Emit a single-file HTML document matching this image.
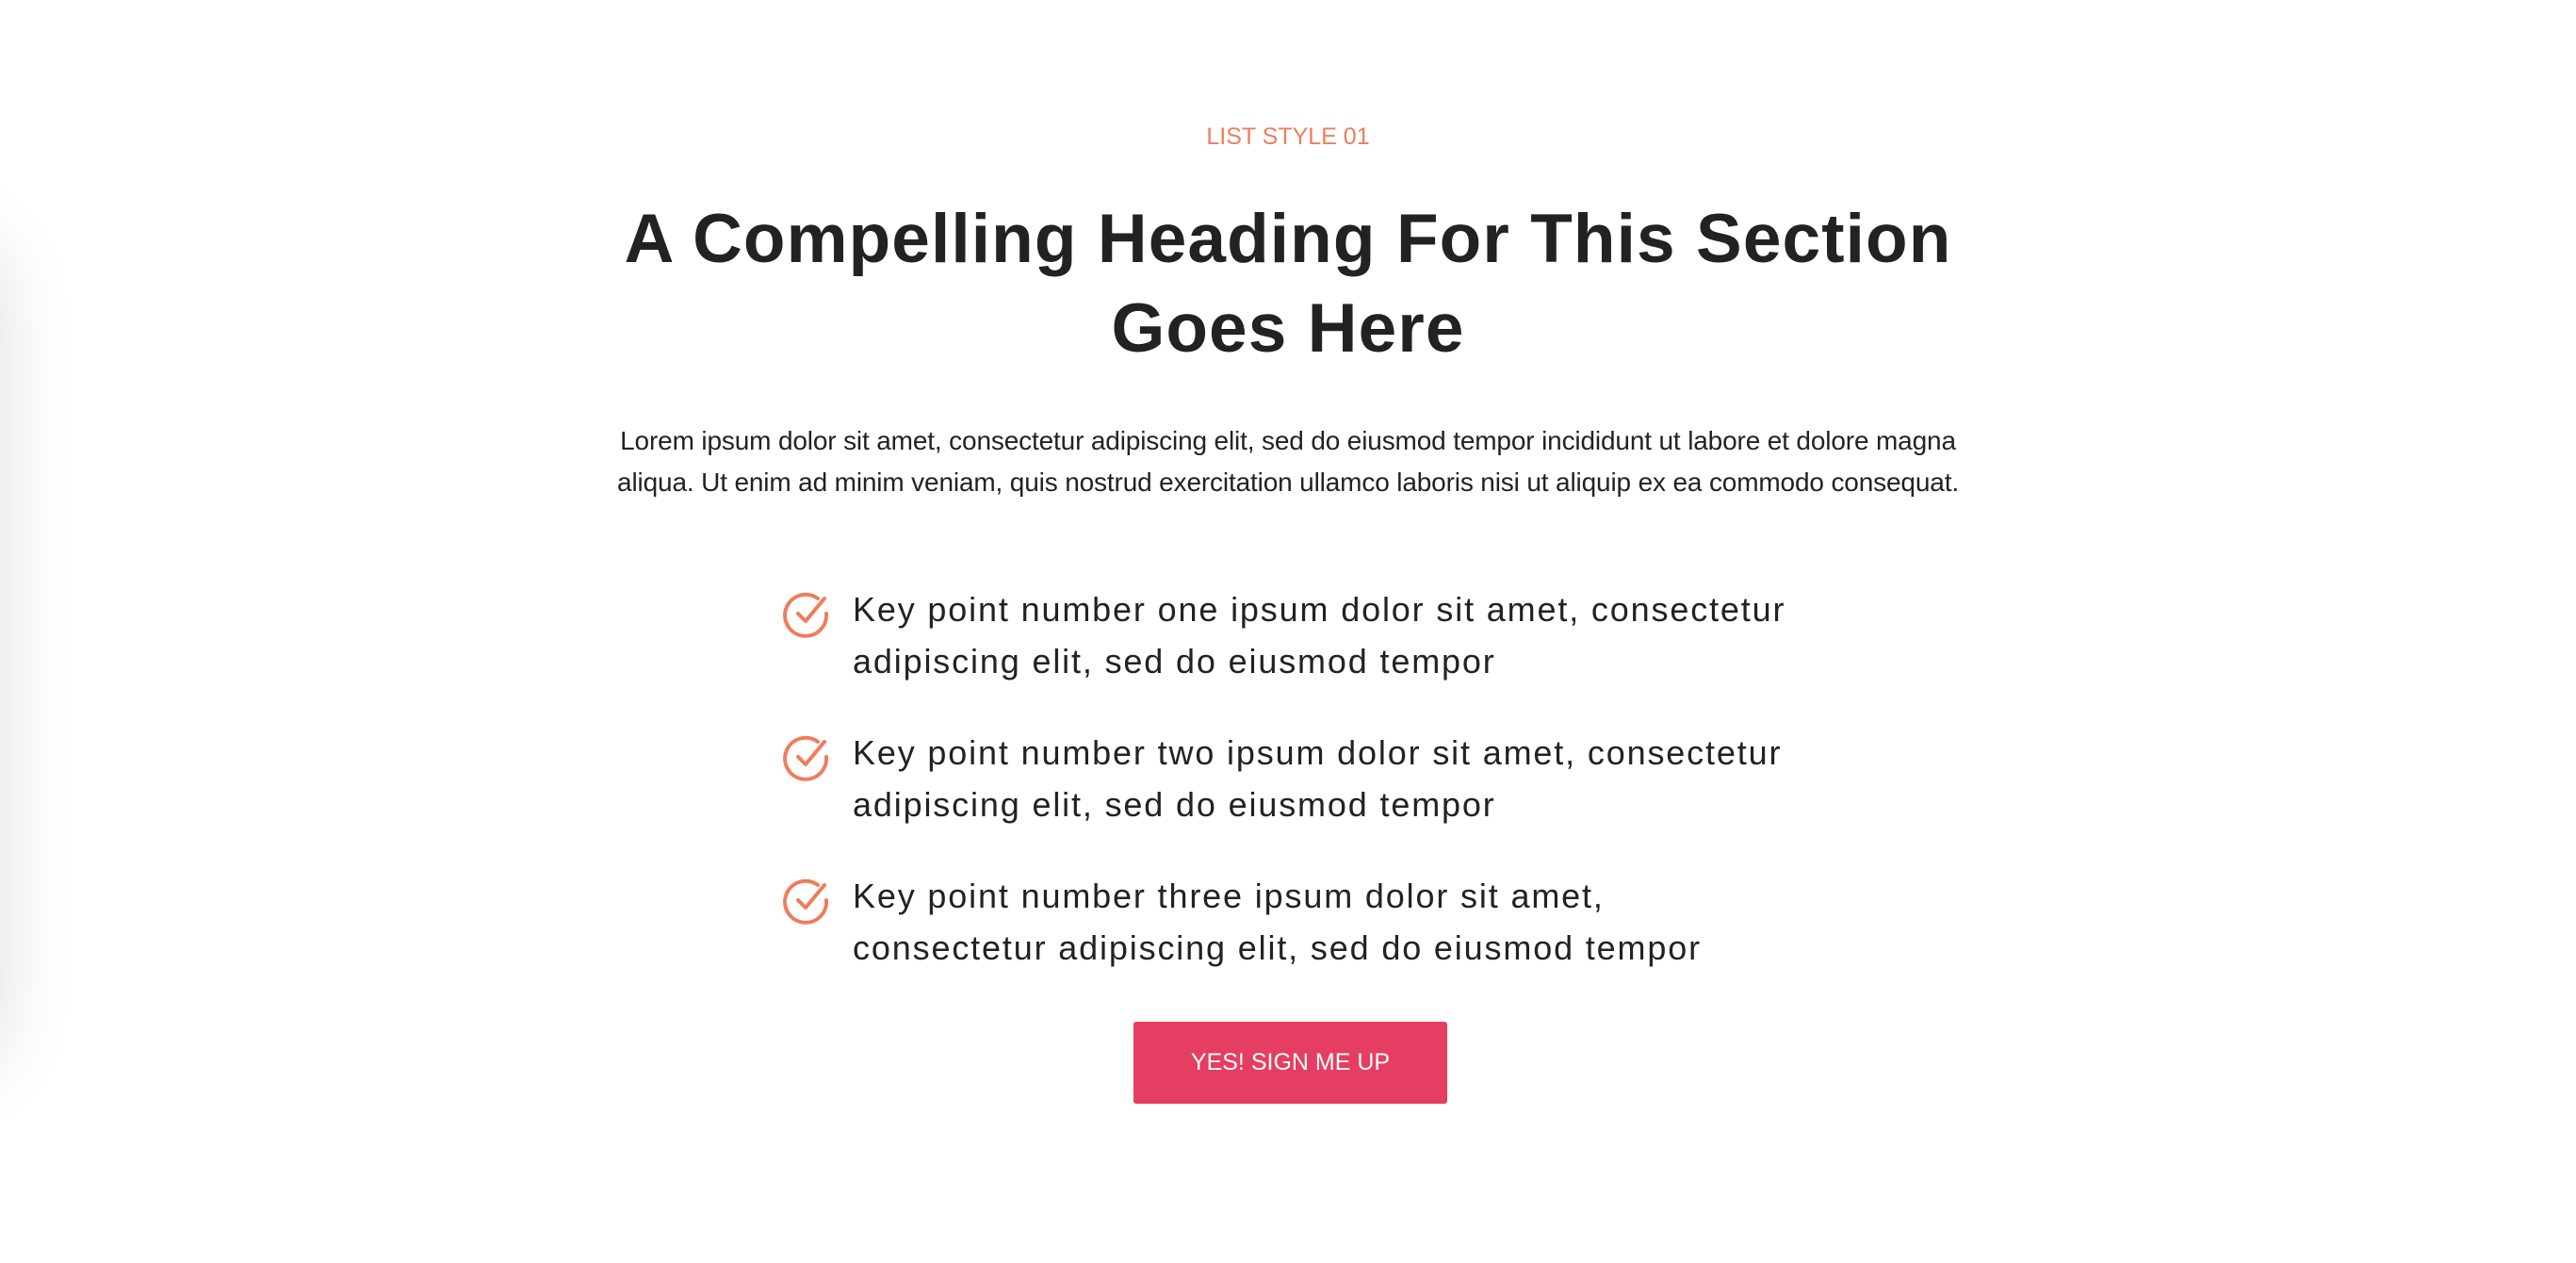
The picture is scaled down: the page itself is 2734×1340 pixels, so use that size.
<!DOCTYPE html>
<html><head><meta charset="utf-8"><style>
html,body{margin:0;padding:0;width:2734px;height:1340px;background:#fff;overflow:hidden;font-family:"Liberation Sans",Arial,sans-serif;}
.sh{position:absolute;left:-400px;top:250px;width:400px;height:890px;border-radius:60px;box-shadow:0 0 80px rgba(0,0,0,.13);background:#fff;}
.c{position:absolute;left:0;width:2734px;text-align:center;white-space:nowrap;}
.lab{top:130px;font-size:25px;line-height:30px;color:#ee7d5c;letter-spacing:0;}
h1{margin:0;top:206px;font-size:73px;line-height:95px;color:#222;font-weight:bold;letter-spacing:1.1px;}
.p{top:446px;font-size:28px;line-height:44px;color:#222;letter-spacing:-0.15px;}
.li{position:absolute;left:905px;font-size:36px;line-height:55px;color:#222;white-space:nowrap;letter-spacing:1.85px;}
.ic{position:absolute;left:830px;width:52px;height:52px;}
.btn{position:absolute;left:1203px;top:1084px;width:333px;height:87px;background:#e63d62;border-radius:3px;color:#fff;font-size:25px;line-height:87px;text-align:center;}
</style></head><body>
<div class="sh"></div>
<div class="c lab">LIST STYLE 01</div>
<h1 class="c">A Compelling Heading For This Section<br>Goes Here</h1>
<div class="c p">Lorem ipsum dolor sit amet, consectetur adipiscing elit, sed do eiusmod tempor incididunt ut labore et dolore magna<br>aliqua. Ut enim ad minim veniam, quis nostrud exercitation ullamco laboris nisi ut aliquip ex ea commodo consequat.</div>

<svg class="ic" style="top:627px" viewBox="0 0 52 52"><path d="M38 8 A22 22 0 1 0 47 24" fill="none" stroke="#ee7d5c" stroke-width="4" stroke-linecap="round"/><path d="M17 24 L25 32 L45 8" fill="none" stroke="#ee7d5c" stroke-width="4" stroke-linecap="round" stroke-linejoin="round"/></svg>
<div class="li" style="top:619px">Key point number one ipsum dolor sit amet, consectetur<br>adipiscing elit, sed do eiusmod tempor</div>

<svg class="ic" style="top:779px" viewBox="0 0 52 52"><path d="M38 8 A22 22 0 1 0 47 24" fill="none" stroke="#ee7d5c" stroke-width="4" stroke-linecap="round"/><path d="M17 24 L25 32 L45 8" fill="none" stroke="#ee7d5c" stroke-width="4" stroke-linecap="round" stroke-linejoin="round"/></svg>
<div class="li" style="top:771px">Key point number two ipsum dolor sit amet, consectetur<br>adipiscing elit, sed do eiusmod tempor</div>

<svg class="ic" style="top:931px" viewBox="0 0 52 52"><path d="M38 8 A22 22 0 1 0 47 24" fill="none" stroke="#ee7d5c" stroke-width="4" stroke-linecap="round"/><path d="M17 24 L25 32 L45 8" fill="none" stroke="#ee7d5c" stroke-width="4" stroke-linecap="round" stroke-linejoin="round"/></svg>
<div class="li" style="top:923px">Key point number three ipsum dolor sit amet,<br>consectetur adipiscing elit, sed do eiusmod tempor</div>

<div class="btn">YES! SIGN ME UP</div>
</body></html>
